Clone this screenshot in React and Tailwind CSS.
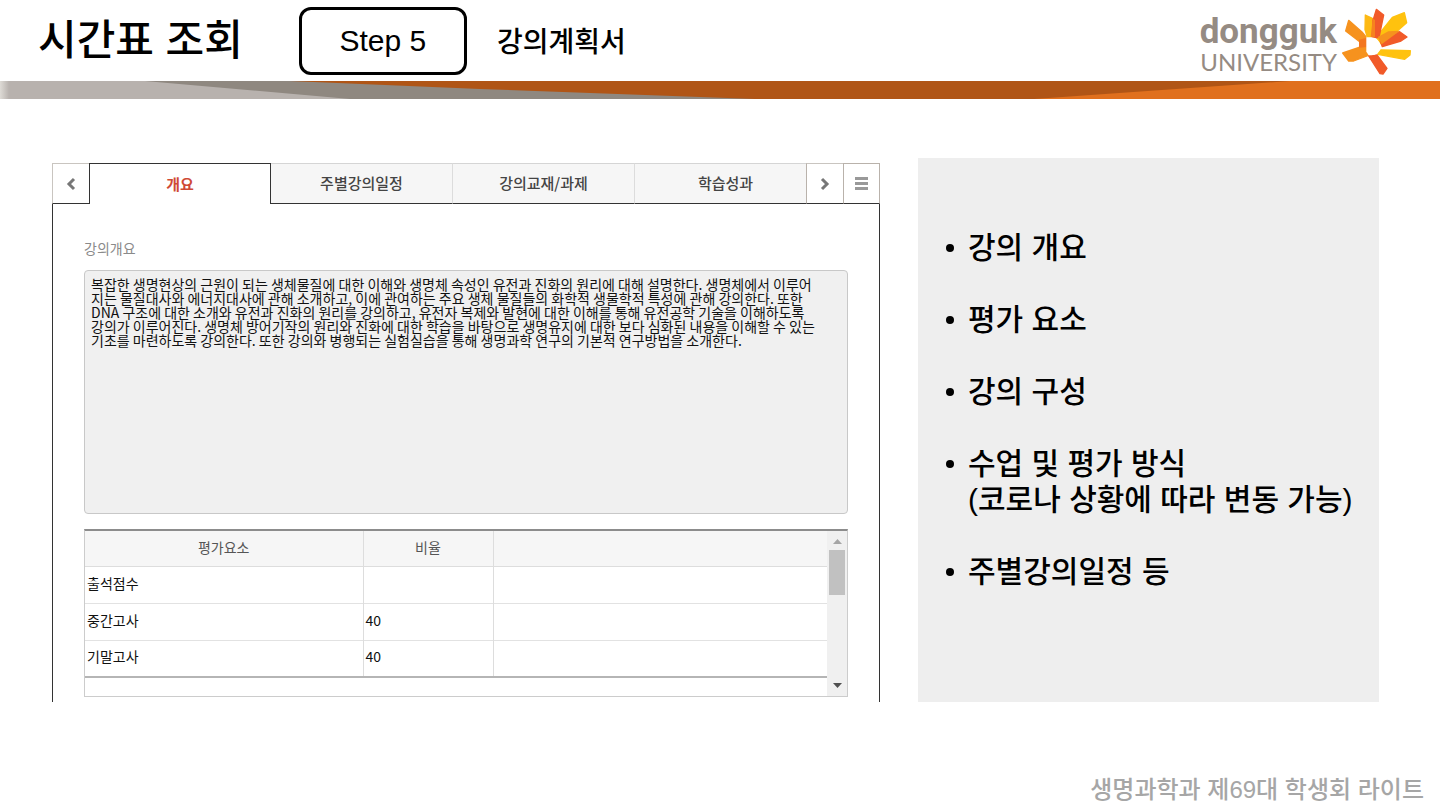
import React, { useState } from 'react';

const TABS = ['개요', '주별강의일정', '강의교재/과제', '학습성과'];

const SUMMARY = [
  '복잡한 생명현상의 근원이 되는 생체물질에 대한 이해와 생명체 속성인 유전과 진화의 원리에 대해 설명한다. 생명체에서 이루어',
  '지는 물질대사와 에너지대사에 관해 소개하고, 이에 관여하는 주요 생체 물질들의 화학적 생물학적 특성에 관해 강의한다. 또한',
  'DNA 구조에 대한 소개와 유전과 진화의 원리를 강의하고, 유전자 복제와 발현에 대한 이해를 통해 유전공학 기술을 이해하도록',
  '강의가 이루어진다. 생명체 방어기작의 원리와 진화에 대한 학습을 바탕으로 생명유지에 대한 보다 심화된 내용을 이해할 수 있는',
  '기초를 마련하도록 강의한다. 또한 강의와 병행되는 실험실습을 통해 생명과학 연구의 기본적 연구방법을 소개한다.',
].join('\n');

const GRADES = [
  { name: '출석점수', ratio: '' },
  { name: '중간고사', ratio: '40' },
  { name: '기말고사', ratio: '40' },
];

const POINTS = [
  ['강의 개요'],
  ['평가 요소'],
  ['강의 구성'],
  ['수업 및 평가 방식', '(코로나 상황에 따라 변동 가능)'],
  ['주별강의일정 등'],
];

function Logo() {
  return (
    <div className="flex items-start gap-1">
      <div className="flex flex-col items-end pt-2 text-[#958b83]">
        <span className="font-['Roboto',sans-serif] text-[35px] leading-9 font-bold">dongguk</span>
        <span className="font-['Lato',sans-serif] text-2xl leading-6 font-normal">UNIVERSITY</span>
      </div>
      <svg viewBox="480 25 213 204" className="mt-0.5 h-[68px] w-[71px]" strokeWidth="4" strokeLinejoin="round" aria-hidden="true">
        <path d="M503 62 L543 97 L557 114 V140 L536 126 L494 94 Z" fill="#f6921e" stroke="#f6921e" />
        <path d="M485 160 L556 136 L566 166 L518 184 L503 184 Z" fill="#f6921e" stroke="#f6921e" />
        <path d="M534 120 L558 114 V142 L534 144 Z" fill="#f3761f" />
        <path d="M553 46 L574 56 L584 113 H559 L552 90 Z" fill="#fdb913" stroke="#fdb913" />
        <path d="M670 39 L634 53 L586 113 L602 135 L677 69 Z" fill="#ffc20e" stroke="#ffc20e" />
        <path d="M586 29 L608 46 L594 114 H574 L576 62 Z" fill="#f15a29" stroke="#f15a29" />
        <path d="M575 56 L582 61 V113 H569 Z" fill="#f6821f" />
        <path d="M656 96 L678 112 L660 124 L604 141 L598 124 Z" fill="#f15a29" stroke="#f15a29" />
        <path d="M590 112 L622 95 L657 93 L602 134 Z" fill="#f6921e" />
        <path d="M600 151 L688 153 L687 166 L671 179 L590 164 Z" fill="#ffc20e" stroke="#ffc20e" />
        <path d="M563 169 L588 166 L618 206 L606 223 L597 222 Z" fill="#f15a29" stroke="#f15a29" />
        <path d="M556 113 H571 A27 27 0 0 1 571 167 H563 L556 156 Z" fill="#fff" />
      </svg>
    </div>
  );
}

function Ribbon() {
  return (
    <svg viewBox="0 0 1440 18" preserveAspectRatio="none" className="block h-[18px] w-full" aria-hidden="true">
      <defs>
        <linearGradient id="edge">
          <stop offset="0" stopColor="#dedbd6" />
          <stop offset="1" stopColor="#b8b2ae" />
        </linearGradient>
      </defs>
      <rect width="1440" height="18" fill="#b8b2ae" />
      <rect width="9" height="18" fill="url(#edge)" />
      <path d="M145 0 H800 V18 H350 Z" fill="#8f8880" />
      <path d="M290 0 H1440 V18 H755 L480 8 Z" fill="#b05516" />
      <path d="M1290 0 H1440 V18 H1034 Z" fill="#e0701e" />
    </svg>
  );
}

function TabBar({ active, onSelect }) {
  return (
    <div className="flex h-[41px]">
      <button type="button" aria-label="이전" className="flex w-[37px] items-center justify-center border-t border-b border-l border-t-[#c9c5c0] border-b-[#333] border-l-[#c9c5c0]">
        <svg viewBox="0 0 10 14" className="h-3.5 w-2.5" fill="none" stroke="#777" strokeWidth="3">
          <path d="M8 2 L3 7 L8 12" />
        </svg>
      </button>
      <div role="tablist" className="flex min-w-0 flex-1 overflow-hidden">
        {TABS.map((tab, idx) => (
          <button
            key={tab}
            type="button"
            role="tab"
            aria-selected={active === idx}
            onClick={() => onSelect(idx)}
            className={
              active === idx
                ? 'w-[182px] shrink-0 border-x border-t border-[#333] bg-white text-[15px] font-bold text-[#cf4a35]'
                : 'w-[182px] shrink-0 border-t border-r border-b border-t-[#d5d5d5] border-r-[#dcdcdc] border-b-[#333] bg-[#f6f6f6] text-[15px] font-medium text-[#444]'
            }
          >
            {tab}
          </button>
        ))}
      </div>
      <button type="button" aria-label="다음" className="flex w-[37px] items-center justify-center border-t border-b border-l border-t-[#c9c5c0] border-b-[#333] border-l-[#b9b2ab]">
        <svg viewBox="0 0 10 14" className="h-3.5 w-2.5" fill="none" stroke="#777" strokeWidth="3">
          <path d="M2 2 L7 7 L2 12" />
        </svg>
      </button>
      <button type="button" aria-label="목록" className="flex w-[37px] items-center justify-center border border-[#b9b2ab] border-b-[#333]">
        <svg viewBox="0 0 13 13" className="h-[13px] w-[13px]" fill="#999">
          <path d="M0 0h13v3H0z M0 5h13v3H0z M0 10h13v3H0z" />
        </svg>
      </button>
    </div>
  );
}

function GradeTable() {
  return (
    <div className="mt-[15px] flex h-[168px] border border-t-2 border-[#ccc] border-t-[#8c8c8c]">
      <div className="flex-1">
        <table className="w-full table-fixed border-collapse text-sm">
          <thead>
            <tr className="h-[35px] border-b border-[#ddd] bg-[#f6f6f6] text-[#555]">
              <th className="w-[278px] border-r border-[#ddd] pb-0.5 font-normal">평가요소</th>
              <th className="w-[130px] border-r border-[#ddd] pb-0.5 font-normal">비율</th>
              <th aria-label="비고"></th>
            </tr>
          </thead>
          <tbody className="border-b-2 border-[#b5b5b5]">
            {GRADES.map((row) => (
              <tr key={row.name} className="h-[37px] border-t border-[#e2e2e2] text-[#111]">
                <td className="border-r border-[#ddd] px-0.5 pb-1">{row.name}</td>
                <td className="border-r border-[#ddd] px-0.5 pb-1">{row.ratio}</td>
                <td></td>
              </tr>
            ))}
          </tbody>
        </table>
      </div>
      {/* Scrollbar */}
      <div className="flex w-5 flex-col items-center bg-[#f0f0f0] py-2">
        <svg viewBox="0 0 9 5" className="h-[5px] w-[9px]" fill="#a5a5a5">
          <path d="M0 5 L4.5 0 L9 5 Z" />
        </svg>
        <div className="mt-1.5 h-[45px] w-4 bg-[#c1c1c1]"></div>
        <svg viewBox="0 0 9 5" className="mt-auto h-[5px] w-[9px]" fill="#505050">
          <path d="M0 0 L4.5 5 L9 0 Z" />
        </svg>
      </div>
    </div>
  );
}

export default function App() {
  const [active, setActive] = useState(0);

  return (
    <div className="flex min-h-screen flex-col bg-white font-['Liberation_Sans','Noto_Sans_CJK_KR',sans-serif] text-black">
      {/* Header */}
      <header className="flex h-[81px] items-center pr-7 pl-[38px]">
        <h1 className="text-[42px] leading-[48px] font-medium whitespace-nowrap">시간표 조회</h1>
        <div className="ml-14 flex h-[68px] w-[168px] items-center justify-center rounded-xl border-3 border-black text-3xl">
          Step 5
        </div>
        <h2 className="ml-[30px] pt-1 text-[28px] leading-9 font-medium whitespace-nowrap">강의계획서</h2>
        <div className="ml-auto">
          <Logo />
        </div>
      </header>
      <Ribbon />

      <main className="grid grid-cols-[828fr_461fr] gap-[38px] pt-[59px] pr-[61px] pl-[52px]">
        {/* Syllabus window */}
        <section className="mt-[5px] min-w-0 font-['Noto_Sans_CJK_KR',sans-serif]">
          <TabBar active={active} onSelect={setActive} />
          <div className="border-x border-[#333] px-[31px] pt-[34px] pb-[5px]">
            <label htmlFor="summary" className="block text-sm leading-5 text-[#8a8a8a]">강의개요</label>
            <textarea
              id="summary"
              readOnly
              value={SUMMARY}
              className="mt-3 block h-[244px] w-full resize-none rounded-sm border border-[#c8c8c8] bg-[#f0f0f0] px-1.5 py-1.5 text-sm leading-[14px] text-[#111] outline-none"
            />
            <GradeTable />
          </div>
        </section>

        {/* Key points */}
        <aside className="min-w-0 bg-[#eee] px-7 pt-[72px]">
          <ul className="flex flex-col gap-9 text-3xl leading-9 font-medium whitespace-nowrap">
            {POINTS.map((lines) => (
              <li key={lines[0]} className="flex gap-3.5">
                <span className="mt-3.5 size-2 shrink-0 rounded-full bg-black"></span>
                <div>
                  {lines.map((line) => (
                    <p key={line}>{line}</p>
                  ))}
                </div>
              </li>
            ))}
          </ul>
        </aside>
      </main>

      <footer className="mt-auto pr-4 pb-1 text-right text-2xl leading-8 font-medium text-[#a6a6a6]">
        생명과학과 제69대 학생회 라이트
      </footer>
    </div>
  );
}
